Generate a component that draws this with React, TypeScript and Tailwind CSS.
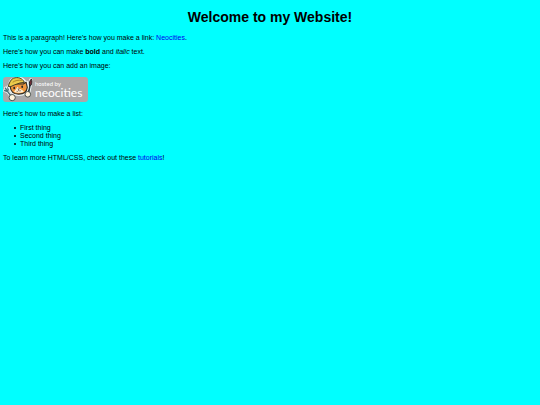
import type { ReactNode } from "react";

const items = ["First thing", "Second thing", "Third thing"];

function TextLink({ href, children }: { href: string; children: ReactNode }) {
  return (
    <a href={href} className="text-[#0000ee]">
      {children}
    </a>
  );
}

function HostedByBadge() {
  return (
    <svg
      viewBox="0 0 85 25"
      className="block h-[25px] w-[85px]"
      role="img"
      aria-label="Hosted by Neocities"
    >
      <rect width="85" height="25" rx="3" fill="#a9a9a9" />

      {/* fork, held on the left */}
      <g strokeLinecap="round" strokeLinejoin="round" fill="none">
        <path d="M8 19 3.8 13.4M1.5 13.6l2.3.6 1.4-1.2-.4-2.8M2.4 11.2l1.4 2.2" stroke="#eef5f5" strokeWidth="3" />
        <path d="M8 19 3.8 13.4M1.5 13.6l2.3.6 1.4-1.2-.4-2.8M2.4 11.2l1.4 2.2" stroke="#4f747c" strokeWidth="1.5" />
      </g>

      {/* brush, held on the right */}
      <g strokeLinecap="round">
        <path d="M25.2 16 27.9 3.4" stroke="#eef5f5" strokeWidth="4" />
        <path d="M25.2 17 27 8" stroke="#263c43" strokeWidth="1.7" />
        <path d="M26.3 7.8c-.4-2.4.7-4.6 2.2-5.8.8 2.2.5 4.4-.4 6.1z" fill="#712d35" stroke="#262629" strokeWidth="1" />
      </g>

      {/* cat */}
      <g strokeLinejoin="round">
        <path
          d="M6.2 8.5C6.4 4 9.2 1.3 13.5 1c4.6-.4 8 1.8 9.2 4.7l1.3-.8.7 5.2c-.4 5-3.9 7.9-9.2 7.8-4.8 0-8.2-2.7-8.4-6.3L5 9z"
          fill="#f3a142"
          stroke="#eef5f5"
          strokeWidth="2.2"
        />
        <path
          d="M7.2 9.8 6.4 6.3l2 .7h12l2.7-1.8 1.2 5.2c-.5 4.5-4 6.8-8.8 6.7-4.5 0-7.8-2.6-8.3-7.3z"
          fill="#ef963c"
          stroke="#302c22"
          strokeWidth="1.1"
        />
        <path d="m14.4 9.8 1.6 1.6 2.8 1.4 2.2 1.6c-3 2-7.3 1.9-10 0l2-2.2z" fill="#fff1d3" />
        <path d="M5 9.3C6.2 7 7.3 2.5 10.3 1.3c4.8-1.7 9-.2 11.1 4l-4.5.7-5.2 1.8-3.8 1.7z" fill="#ebcb4b" stroke="#454027" strokeWidth="1" />
        <path d="M9.7 5.3c2.3-1.8 6-2.5 9-1.8" fill="none" stroke="#a87e28" strokeWidth=".9" />
        <ellipse cx="11.2" cy="11" rx=".9" ry="1.2" fill="#252525" />
        <ellipse cx="19.2" cy="9.8" rx=".9" ry="1.2" fill="#252525" />
        <path d="m14.8 12 1.6-.2-.7.9zM13.5 14.2c1 .5 1.9.2 2.2-.9.7.8 1.6.8 2.4.1" fill="none" stroke="#54372b" strokeWidth=".6" />
      </g>

      {/* paws */}
      <circle cx="9.2" cy="20.6" r="3.1" fill="#fff5dc" stroke="#3c4544" strokeWidth=".9" />
      <circle cx="24.8" cy="17.3" r="2.8" fill="#fff5dc" stroke="#3c4544" strokeWidth=".9" />

      <g fill="#fff" fontFamily="Lato, sans-serif">
        <text x="32" y="9" fontSize="6">
          hosted by
        </text>
        <text x="32" y="20" fontSize="12">
          neocities
        </text>
      </g>
    </svg>
  );
}

export default function App() {
  return (
    <main className="min-h-screen bg-[#00ffff] px-[3px] py-[9px] font-['Liberation_Sans',Arial,sans-serif] text-[7px] leading-[8px] text-black">
      <h1 className="mb-[9px] text-center text-[14px] leading-[16px] font-bold">
        Welcome to my Website!
      </h1>

      <div className="flex flex-col gap-[6px]">
        <p>
          This is a paragraph! Here's how you make a link:{" "}
          <TextLink href="https://neocities.org">Neocities</TextLink>.
        </p>
        <p>
          Here's how you can make <strong>bold</strong> and <em>italic</em> text.
        </p>
        <p>Here's how you can add an image:</p>
        <div className="pt-px pb-[2px]">
          <HostedByBadge />
        </div>
        <p>Here's how to make a list:</p>
        <ul className="pl-[11px]">
          {items.map((item) => (
            <li key={item} className="flex items-center gap-1">
              <span className="size-[2px] rounded-full bg-black" aria-hidden="true" />
              {item}
            </li>
          ))}
        </ul>
        <p>
          To learn more HTML/CSS, check out these{" "}
          <TextLink href="https://neocities.org/tutorials">tutorials</TextLink>!
        </p>
      </div>
    </main>
  );
}
